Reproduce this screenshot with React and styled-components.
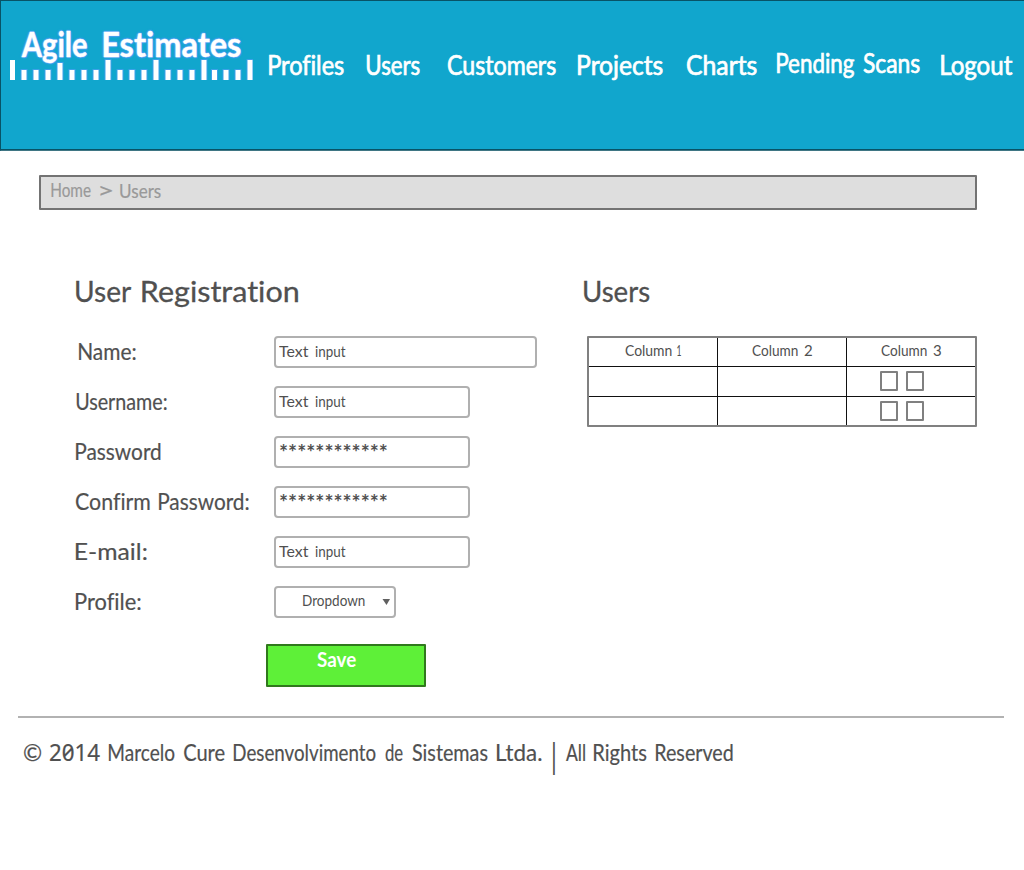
import React, { useLayoutEffect, useRef } from "react";
import styled, { createGlobalStyle } from "styled-components";

const GlobalStyle = createGlobalStyle`
  *, *::before, *::after { box-sizing: border-box; }
  body { margin: 0; background: #fff; color: #505050; font-family: Lato, "Open Sans", sans-serif; overflow: hidden; font-variant-ligatures: none; }
`;

/* ---------- text ---------- */
const Phrase = styled.span`
  display: flex;
  flex: none;
  gap: ${(p) => p.$gap || 8}px;
  margin-left: ${(p) => p.$left || 0}px;
  margin-top: ${(p) => p.$top || 0}px;
  font-size: ${(p) => p.$size}px;
  font-weight: ${(p) => p.$weight || 400};
  line-height: 1.2;
  color: ${(p) => p.$color || "inherit"};
  -webkit-text-stroke: ${(p) => p.$stroke || 0}px currentColor;
`;
const WordSlot = styled.span`
  display: block;
  flex: none;
  width: ${(p) => p.$width}px;
  white-space: nowrap;
  ${(p) => p.$slashed && `font-family: "Noto Sans", Lato, sans-serif; font-feature-settings: "zero" 1; font-variant-numeric: slashed-zero;`}
`;
const Glyphs = styled.span`
  display: inline-block;
  transform-origin: 0 50%;
`;

/* Condenses or widens a word so that its ink fills the given width. */
function Word({ children, width, slashed }) {
  const ref = useRef(null);
  useLayoutEffect(() => {
    const el = ref.current;
    const cs = getComputedStyle(el);
    const large = parseFloat(cs.fontSize) >= 19 ? 1 : 0;
    const range = el.getBoundingClientRect().width;
    const ctx = document.createElement("canvas").getContext("2d");
    ctx.font = `${cs.fontStyle} ${cs.fontWeight} ${cs.fontSize} ${cs.fontFamily}`;
    const m = ctx.measureText(children);
    const ink = m.actualBoundingBoxLeft + m.actualBoundingBoxRight + (range - m.width);
    if (ink > 0) {
      el.style.transform = `translateX(${large}px) scaleX(${(width - large) / ink}) translateX(${m.actualBoundingBoxLeft}px)`;
    }
  }, [children, width]);
  return (
    <WordSlot $width={width} $slashed={slashed}>
      <Glyphs ref={ref}>{children}</Glyphs>
    </WordSlot>
  );
}

function Text({ words, gap, left, top, size, weight, color, stroke }) {
  return (
    <Phrase $gap={gap} $left={left} $top={top} $size={size} $weight={weight} $color={color} $stroke={stroke}>
      {words.map(([text, width, slashed], i) => (
        <React.Fragment key={i}>
          {i > 0 && " "}
          <Word width={width} slashed={slashed}>{text}</Word>
        </React.Fragment>
      ))}
    </Phrase>
  );
}

/* ---------- layout ---------- */
const Page = styled.div`
  width: 1024px;
  height: 870px;
  display: flex;
  flex-direction: column;
  overflow: hidden;
`;
const Header = styled.header`
  display: flex;
  align-items: flex-start;
  height: 151px;
  background: #11a6cd;
  border-top: 1px solid #085366;
  border-left: 1px solid #085366;
  border-bottom: 1px solid #3f7684;
  box-shadow: inset 0 -1px #085366;
`;
const Logo = styled.div`
  width: 243px;
  margin: 21px 0 0 9px;
  display: flex;
  flex-direction: column;
  text-shadow: -1px 0 1px #4b9ff2, 1px 1px 1px #4b9ff2, 0 -1px 1px #4b9ff2, 0 0 3px #4b9ff2, 0 0 2px #4b9ff2;
`;
const Ruler = styled.svg`
  display: block;
  width: 243px;
  height: 22px;
  margin-top: -5px;
`;
const Nav = styled.nav`
  display: flex;
  padding-top: 49px;
`;
const Breadcrumb = styled.div`
  display: flex;
  align-items: flex-start;
  width: 938px;
  height: 35px;
  margin: 24px 0 0 39px;
  border: 2px solid #737373;
  border-radius: 1px;
  background: #dedede;
`;
const Columns = styled.main`
  display: flex;
  height: 506px;
`;
const Registration = styled.section`
  width: 583px;
  padding: 65px 0 0 75px;
`;
const UserList = styled.section`
  padding-top: 65px;
`;
const Form = styled.div`
  display: flex;
  flex-direction: column;
  gap: 18px;
  margin-top: 27px;
`;
const Field = styled.div`
  display: flex;
  align-items: flex-start;
  height: 32px;
`;
const FieldLabel = styled.label`
  width: 199px;
  flex: none;
  display: flex;
`;
const Control = styled.div`
  display: flex;
  align-items: flex-start;
  width: ${(p) => p.$width}px;
  height: 32px;
  border: 2px solid #b0b0b0;
  border-radius: 4px;
  background: #fff;
`;
const Arrow = styled.svg`
  width: 8px;
  height: 6px;
  margin: 11px 0 0 17px;
`;
const SaveButton = styled.div`
  display: flex;
  align-items: flex-start;
  width: 160px;
  height: 43px;
  margin: 26px 0 0 191px;
  border: 2px solid #30791d;
  border-radius: 1px;
  background: #5ef038;
`;
const Table = styled.div`
  display: grid;
  grid-template-columns: repeat(3, 128px);
  grid-template-rows: 28px 29px 28px;
  gap: 1px;
  width: 390px;
  height: 91px;
  margin: 27px 0 0 4px;
  border: 2px solid #808080;
  border-radius: 1px;
  background: #111;
`;
const Cell = styled.div`
  display: flex;
  align-items: flex-start;
  gap: 8px;
  background: #fff;
  padding: ${(p) => p.$pad || "0"};
`;
const Box = styled.span`
  width: 18px;
  height: 20px;
  border: 2px solid #808080;
  border-radius: 1px;
`;
const Footer = styled.footer`
  display: flex;
  align-items: flex-start;
  width: 986px;
  margin-left: 18px;
  border-top: 2px solid #b2b2b2;
`;

const RULER_X = [0, 11, 23, 35, 47, 59, 71, 83, 95, 107, 119, 131, 143, 155, 167, 179, 191, 201, 213, 225, 237];
const RULER_TICKS = [
  [0, 1], [11.5, 11], [23.5, 11], [35.5, 11], [47.5, 4],
  [59.5, 11], [71.5, 11], [83.5, 11], [95.5, 1],
  [107.5, 11], [119.5, 11], [131.5, 11], [143.5, 1],
  [155.5, 11], [167.5, 11], [179.5, 11], [191.5, 1],
  [202, 11], [213.5, 11], [225.5, 11], [237.5, 1],
];

const NAV = [
  { words: [["Profiles", 76]], left: 15, top: 0 },
  { words: [["Users", 54]], left: 22, top: 0 },
  { words: [["Customers", 109]], left: 27, top: 0 },
  { words: [["Projects", 86]], left: 21, top: 0 },
  { words: [["Charts", 71]], left: 23, top: 0 },
  { words: [["Pending", 78], ["Scans", 58]], left: 19, top: -2 },
  { words: [["Logout", 73]], left: 20, top: 0 },
];

const TEXT_INPUT = [["Text", 30], ["input", 31]];
const STARS = [["************", 108]];
const FIELDS = [
  { label: [["Name:", 58]], left: 3, width: 263 },
  { label: [["Username:", 92]], width: 196 },
  { label: [["Password", 86]], width: 196, secret: true },
  { label: [["Confirm", 75], ["Password:", 91]], width: 196, secret: true },
  { label: [["E-mail:", 72]], width: 196 },
];

export default function App() {
  return (
    <>
      <GlobalStyle />
      <Page>
        <Header>
          <Logo>
            <Text words={[["Agile", 67], ["Estimates", 139]]} gap={15} left={10} size={35} weight={700} color="#fff" stroke={0.4} />
            <Ruler viewBox="0 0 243 22">
              {RULER_TICKS.map(([x, top], i) => (
                <g key={x}>
                  {i > 0 && <rect x={x - 1} y={top - 1} width="7" height={22 - top} fill="#4b9ff2" opacity="0.75" />}
                  <rect x={x} y={top} width="5" height={21 - top} fill="#fff" />
                </g>
              ))}
            </Ruler>
          </Logo>
          <Nav>
            {NAV.map((n) => (
              <Text key={n.words[0][0]} {...n} size={26} color="#fff" stroke={0.7} />
            ))}
          </Nav>
        </Header>

        <Breadcrumb>
          <Text words={[["Home", 41]]} left={9} top={2} size={19} color="#999" stroke={0.2} />
          <Text words={[[">", 13]]} left={8} top={0} size={22} color="#999" stroke={0.2} />
          <Text words={[["Users", 42]]} left={7} top={3} size={19} color="#999" stroke={0.2} />
        </Breadcrumb>

        <Columns>
          <Registration>
            <Text words={[["User", 56], ["Registration", 157]]} gap={10} size={28} stroke={0.3} />
            <Form>
              {FIELDS.map((f) => (
                <Field key={f.label[0][0]}>
                  <FieldLabel>
                    <Text words={f.label} left={f.left} top={2} size={23} stroke={0.2} />
                  </FieldLabel>
                  <Control $width={f.width}>
                    {f.secret ? (
                      <Text words={STARS} left={3} top={1} size={21} weight={700} />
                    ) : (
                      <Text words={TEXT_INPUT} gap={6} left={3} top={4} size={15} />
                    )}
                  </Control>
                </Field>
              ))}
              <Field>
                <FieldLabel>
                  <Text words={[["Profile:", 66]]} top={2} size={23} stroke={0.2} />
                </FieldLabel>
                <Control $width={122}>
                  <Text words={[["Dropdown", 62]]} left={27} top={3} size={15} />
                  <Arrow viewBox="0 0 8 6"><path d="M0.5 0h7.5L4.5 6z" fill="#606060" /></Arrow>
                </Control>
              </Field>
            </Form>
            <SaveButton>
              <Text words={[["Save", 40]]} left={48} top={0} size={21} weight={700} color="#fff" />
            </SaveButton>
          </Registration>

          <UserList>
            <Text words={[["Users", 67]]} size={28} stroke={0.3} />
            <Table>
              <Cell $pad="3px 0 0 36px"><Text words={[["Column", 47], ["1", 4]]} gap={5} size={15} /></Cell>
              <Cell $pad="3px 0 0 34px"><Text words={[["Column", 46], ["2", 8]]} gap={6} size={15} /></Cell>
              <Cell $pad="3px 0 0 34px"><Text words={[["Column", 46], ["3", 8]]} gap={6} size={15} /></Cell>
              <Cell /><Cell />
              <Cell $pad="4px 0 0 33px"><Box /><Box /></Cell>
              <Cell /><Cell />
              <Cell $pad="4px 0 0 33px"><Box /><Box /></Cell>
            </Table>
          </UserList>
        </Columns>

        <Footer>
          <Text
            words={[["©", 18], ["2014", 51, true], ["Marcelo", 67], ["Cure", 42], ["Desenvolvimento", 143], ["de", 19], ["Sistemas", 77], ["Ltda.", 46]]}
            left={5} top={21} size={23} stroke={0.2}
          />
          <Text words={[["|", 3]]} left={10} top={16} size={35} />
          <Text words={[["All", 20], ["Rights", 54], ["Reserved", 78]]} left={10} top={21} size={23} stroke={0.2} />
        </Footer>
      </Page>
    </>
  );
}
